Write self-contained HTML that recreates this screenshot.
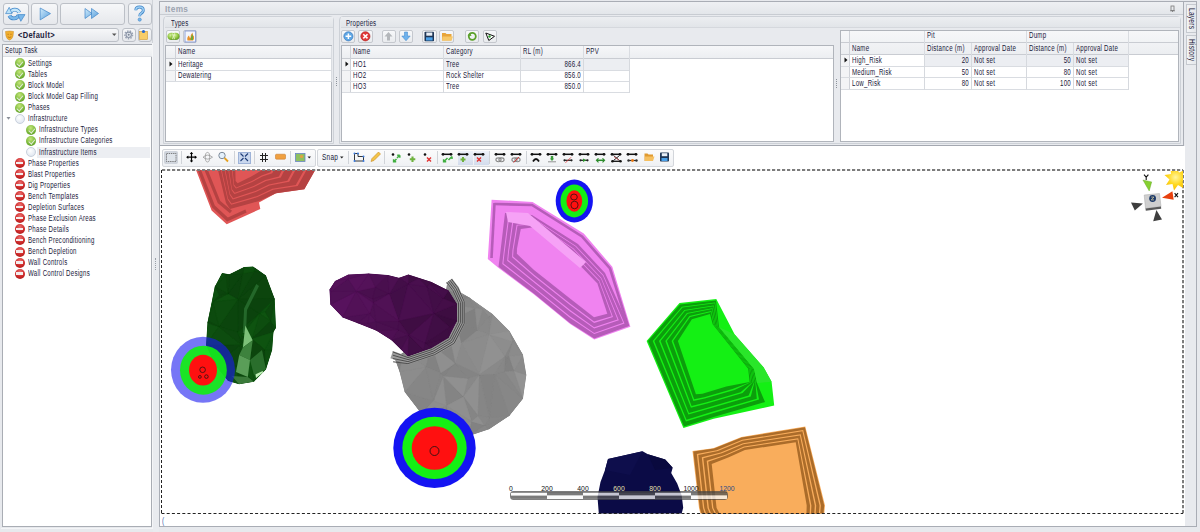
<!DOCTYPE html>
<html><head><meta charset="utf-8">
<style>
*{box-sizing:border-box;margin:0;padding:0}
html,body{width:1200px;height:532px;overflow:hidden;background:#e7e9ed;font-family:"Liberation Sans",sans-serif;position:relative}
.a{position:absolute}
.t{position:absolute;font-size:8.5px;line-height:10px;white-space:nowrap;color:#20203a;letter-spacing:.35px;transform:scaleX(.72);transform-origin:0 0}
.tr{transform-origin:100% 0}
.btn{position:absolute;border:1px solid #bcc0c7;border-radius:3px;background:linear-gradient(#f6f7f9,#e6e8ec)}
.sbtn{position:absolute;border:1px solid #c5c8ce;border-radius:2px;background:linear-gradient(#f7f8fa,#e9ebee)}
.ic{position:absolute;width:10px;height:10px;border-radius:50%}
.ic.g{background:radial-gradient(circle at 45% 30%,#c4e67a,#7ab83a 55%,#4f8a1e)}
.ic.g::after{content:"";position:absolute;left:3.8px;top:2px;width:2.6px;height:4.6px;border:solid #e4ecdc;border-width:0 1.3px 1.3px 0;transform:rotate(40deg)}
.ic.r{background:radial-gradient(circle at 50% 30%,#ee7070,#cc2828 55%,#a01818)}
.ic.r::after{content:"";position:absolute;left:1.4px;top:3.9px;width:7.2px;height:2.2px;background:#f4eeee}
.ic.o{background:radial-gradient(circle at 40% 35%,#ffffff,#e4eaf2 70%);border:1px solid #c8d0dc}
.grid{position:absolute;background:#fff;border:1px solid #a9adb4}
.hd{position:absolute;background:linear-gradient(#f5f6f8,#eceef1);border-right:1px solid #d0d3d8;border-bottom:1px solid #c9ccd2}
.ln{position:absolute;background:#d9dce1}
</style></head><body>
<!-- LEFT PANEL -->
<div class="a" style="left:0;top:0;width:155px;height:532px;background:#e7e9ed"></div>
<div class="btn" style="left:2.5px;top:2.5px;width:26px;height:22.5px"></div>
<div class="btn" style="left:31px;top:2.5px;width:26.5px;height:22.5px"></div>
<div class="btn" style="left:60px;top:2.5px;width:64.5px;height:22.5px"></div>
<div class="btn" style="left:127.5px;top:2.5px;width:24px;height:22.5px"></div>
<svg class="a" style="left:0;top:0" width="155" height="28" viewBox="0 0 155 28">
 <defs><linearGradient id="bl" x1="0" y1="0" x2="0" y2="1"><stop offset="0" stop-color="#d4eefc"/><stop offset="1" stop-color="#6fb0e6"/></linearGradient>
 <linearGradient id="bl2" x1="0" y1="0" x2="1" y2="1"><stop offset="0" stop-color="#cfeafb"/><stop offset="1" stop-color="#5aa0dc"/></linearGradient></defs>
 <!-- refresh -->
 <path d="M10.3 12.5 A5 5 0 0 1 19.3 12.5" fill="none" stroke="#3f85c8" stroke-width="3.8"/>
 <path d="M10.3 12.5 A5 5 0 0 1 19.3 12.5" fill="none" stroke="#c4e6fa" stroke-width="2.4"/>
 <path d="M18.6 15.2 A5 5 0 0 1 9.4 15.6" fill="none" stroke="#3f85c8" stroke-width="3.8"/>
 <path d="M18.6 15.2 A5 5 0 0 1 9.4 15.6" fill="none" stroke="#7ab8ea" stroke-width="2.4"/>
 <path d="M5.6 13.6 L9.2 7.3 L12 13.6 Z" fill="#b8e0f8" stroke="#3f85c8" stroke-width=".7"/>
 <path d="M17.8 14.6 L25 14.6 L20.8 21.3 Z" fill="#7ab8ea" stroke="#3f85c8" stroke-width=".7"/>
 <!-- play -->
 <path d="M40.2 8 L50.5 13.6 L40.2 19.9 Z" fill="url(#bl2)" stroke="#3f85c8" stroke-width=".7"/>
 <!-- fast fwd -->
 <path d="M85 8.5 L92 13.5 L85 18.5 Z M91.5 8.5 L98.5 13.5 L91.5 18.5 Z" fill="url(#bl2)" stroke="#3f85c8" stroke-width=".7"/>
 <!-- help -->
 <path d="M135.8 10.2 Q135.8 7 139.5 7 Q143.3 7 143.3 10.2 Q143.3 12.3 141 13.4 Q139.7 14.1 139.7 16.2" fill="none" stroke="#3f85c8" stroke-width="2.8"/>
 <path d="M135.8 10.2 Q135.8 7 139.5 7 Q143.3 7 143.3 10.2 Q143.3 12.3 141 13.4 Q139.7 14.1 139.7 16.2" fill="none" stroke="#9fd0f4" stroke-width="1.4"/>
 <circle cx="139.7" cy="19.6" r="1.6" fill="#7ab8ea" stroke="#3f85c8" stroke-width=".6"/>
</svg>
<!-- combo -->
<div class="btn" style="left:2px;top:28px;width:117px;height:13.5px;border-radius:3px"></div>
<svg class="a" style="left:4px;top:30px" width="12" height="11" viewBox="0 0 12 11"><path d="M1.5 1.5 Q5.5 0.5 9.5 1.5 L9 6 Q8 9.5 5.5 10 Q3 9.5 2 6 Z" fill="#f2b030" stroke="#c88418" stroke-width=".5"/><path d="M3.5 4.3h1.3M6.3 4.3h1.3M3.8 6.8 Q5.5 8.3 7.3 6.8" stroke="#a05a10" stroke-width=".6" fill="none"/></svg>
<div class="t" style="left:18px;top:30px;font-weight:bold;font-size:8.5px;transform:scaleX(.88)">&lt;Default&gt;</div>
<svg class="a" style="left:112px;top:33px" width="5" height="4"><path d="M0 0.5h4.5L2.25 3z" fill="#555"/></svg>
<div class="btn" style="left:122px;top:28px;width:13.5px;height:13.5px"></div>
<div class="btn" style="left:138px;top:28px;width:13.5px;height:13.5px"></div>
<svg class="a" style="left:122px;top:28px" width="30" height="14" viewBox="0 0 30 14">
 <circle cx="6.7" cy="6.8" r="3.9" fill="none" stroke="#9aa3b3" stroke-width="1.4" stroke-dasharray="1.5 1.2"/>
 <circle cx="6.7" cy="6.8" r="2.7" fill="#e4e8ee" stroke="#8c96a8" stroke-width="1.1"/>
 <circle cx="6.7" cy="6.8" r="1" fill="#7a8496"/>
 <rect x="17.5" y="3.5" width="8" height="8" fill="#f8cd6a" stroke="#d39b33" stroke-width=".6"/>
 <circle cx="21.5" cy="3.5" r="1.6" fill="#2a6ad0"/>
</svg>
<!-- tree panel -->
<div class="a" style="left:152px;top:0;width:1px;height:44px;background:#cfd3d9"></div>
<div class="a" style="left:1px;top:43px;width:152px;height:486px;border:1px solid #f4f5f7;border-top:none;border-left:none"></div><div class="a" style="left:2px;top:44px;width:150px;height:483px;border:1px solid #a9adb4;background:#fff"></div>
<div class="a" style="left:3px;top:45px;width:149px;height:12px;background:linear-gradient(#f7f8f9,#eceef1);border-bottom:1px solid #dadde2"></div>
<div class="t" style="left:5px;top:45px">Setup Task</div>
<div class="a" style="left:36.7px;top:146.5px;width:113.7px;height:11px;background:#eceef2"></div>
<svg class="a" style="left:6px;top:116px" width="5" height="5"><path d="M0.5 1h4L2.5 3.8z" fill="#8a8f98"/></svg>
<div class="ic g" style="left:14.6px;top:58.3px"></div>
<div class="t" style="left:27.6px;top:57.9px">Settings</div>
<div class="ic g" style="left:14.6px;top:69.4px"></div>
<div class="t" style="left:27.6px;top:69.0px">Tables</div>
<div class="ic g" style="left:14.6px;top:80.4px"></div>
<div class="t" style="left:27.6px;top:80.0px">Block Model</div>
<div class="ic g" style="left:14.6px;top:91.5px"></div>
<div class="t" style="left:27.6px;top:91.1px">Block Model Gap Filling</div>
<div class="ic g" style="left:14.6px;top:102.6px"></div>
<div class="t" style="left:27.6px;top:102.2px">Phases</div>
<div class="ic o" style="left:14.6px;top:113.7px"></div>
<div class="t" style="left:27.6px;top:113.3px">Infrastructure</div>
<div class="ic g" style="left:25.8px;top:124.7px"></div>
<div class="t" style="left:38.5px;top:124.3px">Infrastructure Types</div>
<div class="ic g" style="left:25.8px;top:135.8px"></div>
<div class="t" style="left:38.5px;top:135.4px">Infrastructure Categories</div>
<div class="ic o" style="left:25.8px;top:146.9px"></div>
<div class="t" style="left:38.5px;top:146.5px">Infrastructure Items</div>
<div class="ic r" style="left:14.6px;top:157.9px"></div>
<div class="t" style="left:27.6px;top:157.5px">Phase Properties</div>
<div class="ic r" style="left:14.6px;top:169.0px"></div>
<div class="t" style="left:27.6px;top:168.6px">Blast Properties</div>
<div class="ic r" style="left:14.6px;top:180.1px"></div>
<div class="t" style="left:27.6px;top:179.7px">Dig Properties</div>
<div class="ic r" style="left:14.6px;top:191.1px"></div>
<div class="t" style="left:27.6px;top:190.7px">Bench Templates</div>
<div class="ic r" style="left:14.6px;top:202.2px"></div>
<div class="t" style="left:27.6px;top:201.8px">Depletion Surfaces</div>
<div class="ic r" style="left:14.6px;top:213.3px"></div>
<div class="t" style="left:27.6px;top:212.9px">Phase Exclusion Areas</div>
<div class="ic r" style="left:14.6px;top:224.4px"></div>
<div class="t" style="left:27.6px;top:223.9px">Phase Details</div>
<div class="ic r" style="left:14.6px;top:235.4px"></div>
<div class="t" style="left:27.6px;top:235.0px">Bench Preconditioning</div>
<div class="ic r" style="left:14.6px;top:246.5px"></div>
<div class="t" style="left:27.6px;top:246.1px">Bench Depletion</div>
<div class="ic r" style="left:14.6px;top:257.6px"></div>
<div class="t" style="left:27.6px;top:257.2px">Wall Controls</div>
<div class="ic r" style="left:14.6px;top:268.6px"></div>
<div class="t" style="left:27.6px;top:268.2px">Wall Control Designs</div><!-- splitter -->
<div class="a" style="left:153px;top:0;width:6px;height:532px;background:#e9ebef"></div>
<div class="a" style="left:155px;top:258px;width:1px;height:12px;border-left:1px dotted #9aa0a8"></div>
<!-- ITEMS panel -->
<div class="a" style="left:159px;top:1px;width:1038px;height:526px;background:#e8eaee;border:1px solid #a9adb5"></div>
<div class="a" style="left:160px;top:2px;width:1024px;height:144px;background:#e8eaee;border-right:1px solid #a9adb5;border-bottom:1px solid #a4a8b0"></div>
<div class="a" style="left:160px;top:2px;width:1023px;height:13px;background:linear-gradient(#eef0f3,#e3e6ea);border-bottom:1px solid #c8ccd2"></div>
<div class="t" style="left:165px;top:4px;color:#9ba3b0;-webkit-text-stroke:0;font-weight:bold;font-size:9px;transform:scaleX(.92)">Items</div>
<svg class="a" style="left:1170px;top:5px" width="6" height="7"><rect x="1" y="1" width="3" height="4.5" fill="none" stroke="#777" stroke-width=".8"/><path d="M0 5.8h5M2.5 5.8v1.2" stroke="#777" stroke-width=".8"/></svg>
<!-- Types group -->
<div class="a" style="left:163px;top:16px;width:170.5px;height:128px;border:1px solid #cdd1d7;border-radius:4px 4px 0 0;background:#e8eaee"></div>
<div class="a" style="left:164.5px;top:17px;width:168px;height:11px;background:linear-gradient(#eceef1,#e2e5e9);border-bottom:1px solid #d5d8dd"></div>
<div class="t" style="left:171px;top:18px">Types</div>
<div class="sbtn" style="left:165.5px;top:29.5px;width:14.5px;height:13px"></div>
<div class="sbtn" style="left:183px;top:29.5px;width:14px;height:13px"></div>
<!-- Properties group -->
<div class="a" style="left:339px;top:16px;width:841.5px;height:128px;border:1px solid #cdd1d7;border-radius:4px 4px 0 0;background:#e8eaee"></div>
<div class="a" style="left:340.5px;top:17px;width:839px;height:11px;background:linear-gradient(#eceef1,#e2e5e9);border-bottom:1px solid #d5d8dd"></div>
<div class="t" style="left:345.5px;top:18px">Properties</div>
<div class="a" style="left:165.0px;top:45.0px;width:167.0px;height:97.0px;background:#fff;border:1px solid #b0b4bb"></div>
<div class="a" style="left:166.0px;top:46.0px;width:165.0px;height:12.0px;background:linear-gradient(#f6f7f9,#eceef1)"></div>
<div class="a" style="left:166.0px;top:58.0px;width:165.0px;height:1.0px;background:#c9ccd2"></div>
<div class="a" style="left:166.0px;top:59.0px;width:10.0px;height:22.0px;background:#f3f4f6"></div>
<div class="a" style="left:175.0px;top:46.0px;width:1.0px;height:36.0px;background:#cfd2d8"></div>
<div class="a" style="left:166.0px;top:70.0px;width:166.0px;height:1.0px;background:#d9dce1"></div>
<div class="a" style="left:166.0px;top:81.0px;width:166.0px;height:1.0px;background:#d9dce1"></div>
<div class="a" style="left:331.0px;top:46.0px;width:1.0px;height:36.0px;background:#d9dce1"></div>
<div class="t" style="left:177.8px;top:46px;">Name</div>
<div class="t" style="left:177.8px;top:59px;">Heritage</div>
<div class="t" style="left:177.8px;top:70px;">Dewatering</div>
<svg class="a" style="left:169px;top:61px" width="4" height="6"><path d="M0.5 0.5L3.5 3L0.5 5.5z" fill="#111"/></svg>
<div class="a" style="left:341.0px;top:45.0px;width:493.0px;height:97.0px;background:#fff;border:1px solid #b0b4bb"></div>
<div class="a" style="left:342.0px;top:46.0px;width:491.0px;height:12.0px;background:linear-gradient(#f6f7f9,#eceef1)"></div>
<div class="a" style="left:342.0px;top:58.0px;width:491.0px;height:1.0px;background:#c9ccd2"></div>
<div class="a" style="left:342.0px;top:59.0px;width:9.0px;height:33.0px;background:#f3f4f6"></div>
<div class="a" style="left:350.0px;top:46.0px;width:1.0px;height:47.0px;background:#cfd2d8"></div>
<div class="a" style="left:342.0px;top:70.0px;width:288.0px;height:1.0px;background:#d9dce1"></div>
<div class="a" style="left:342.0px;top:81.0px;width:288.0px;height:1.0px;background:#d9dce1"></div>
<div class="a" style="left:342.0px;top:92.0px;width:288.0px;height:1.0px;background:#d9dce1"></div>
<div class="a" style="left:443.0px;top:46.0px;width:1.0px;height:47.0px;background:#d9dce1"></div>
<div class="a" style="left:520.0px;top:46.0px;width:1.0px;height:47.0px;background:#d9dce1"></div>
<div class="a" style="left:583.0px;top:46.0px;width:1.0px;height:47.0px;background:#d9dce1"></div>
<div class="a" style="left:629.0px;top:46.0px;width:1.0px;height:47.0px;background:#d9dce1"></div>
<div class="a" style="left:444.0px;top:59.0px;width:185.0px;height:11.0px;background:#eceef2"></div>
<div class="a" style="left:443.0px;top:59.0px;width:1.0px;height:34.0px;background:#d6d9de"></div>
<div class="a" style="left:520.0px;top:59.0px;width:1.0px;height:34.0px;background:#d6d9de"></div>
<div class="a" style="left:583.0px;top:59.0px;width:1.0px;height:34.0px;background:#d6d9de"></div>
<div class="a" style="left:629.0px;top:59.0px;width:1.0px;height:34.0px;background:#d6d9de"></div>
<div class="t" style="left:353.3px;top:46px;">Name</div>
<div class="t" style="left:446.0px;top:46px;">Category</div>
<div class="t" style="left:523.0px;top:46px;">RL (m)</div>
<div class="t" style="left:586.0px;top:46px;">PPV</div>
<div class="t" style="left:353.3px;top:59px;">HO1</div>
<div class="t" style="left:446.0px;top:59px;">Tree</div>
<div class="t tr" style="left:520.8px;width:60px;text-align:right;top:59px">866.4</div>
<div class="t" style="left:353.3px;top:70px;">HO2</div>
<div class="t" style="left:446.0px;top:70px;">Rock Shelter</div>
<div class="t tr" style="left:520.8px;width:60px;text-align:right;top:70px">856.0</div>
<div class="t" style="left:353.3px;top:81px;">HO3</div>
<div class="t" style="left:446.0px;top:81px;">Tree</div>
<div class="t tr" style="left:520.8px;width:60px;text-align:right;top:81px">850.0</div>
<svg class="a" style="left:345px;top:61px" width="4" height="6"><path d="M0.5 0.5L3.5 3L0.5 5.5z" fill="#111"/></svg>
<div class="a" style="left:840.0px;top:30.0px;width:339.0px;height:112.0px;background:#fff;border:1px solid #b0b4bb"></div>
<div class="a" style="left:841.0px;top:31.0px;width:337.0px;height:23.0px;background:linear-gradient(#f6f7f9,#eceef1)"></div>
<div class="a" style="left:841.0px;top:42.0px;width:337.0px;height:1.0px;background:#c9ccd2"></div>
<div class="a" style="left:841.0px;top:54.0px;width:337.0px;height:1.0px;background:#c9ccd2"></div>
<div class="a" style="left:841.0px;top:55.0px;width:9.0px;height:34.0px;background:#f3f4f6"></div>
<div class="a" style="left:849.0px;top:31.0px;width:1.0px;height:59.0px;background:#cfd2d8"></div>
<div class="a" style="left:841.0px;top:66.0px;width:288.0px;height:1.0px;background:#d9dce1"></div>
<div class="a" style="left:841.0px;top:77.0px;width:288.0px;height:1.0px;background:#d9dce1"></div>
<div class="a" style="left:841.0px;top:89.0px;width:288.0px;height:1.0px;background:#d9dce1"></div>
<div class="a" style="left:924.0px;top:31.0px;width:1.0px;height:59.0px;background:#d9dce1"></div>
<div class="a" style="left:971.0px;top:43.0px;width:1.0px;height:47.0px;background:#d9dce1"></div>
<div class="a" style="left:1026.0px;top:31.0px;width:1.0px;height:59.0px;background:#d9dce1"></div>
<div class="a" style="left:1073.0px;top:43.0px;width:1.0px;height:47.0px;background:#d9dce1"></div>
<div class="a" style="left:1128.0px;top:31.0px;width:1.0px;height:59.0px;background:#d9dce1"></div>
<div class="a" style="left:925.0px;top:55.0px;width:203.0px;height:11.0px;background:#eceef2"></div>
<div class="a" style="left:924.0px;top:55.0px;width:1.0px;height:35.0px;background:#d6d9de"></div>
<div class="a" style="left:971.0px;top:55.0px;width:1.0px;height:35.0px;background:#d6d9de"></div>
<div class="a" style="left:1026.0px;top:55.0px;width:1.0px;height:35.0px;background:#d6d9de"></div>
<div class="a" style="left:1073.0px;top:55.0px;width:1.0px;height:35.0px;background:#d6d9de"></div>
<div class="a" style="left:1128.0px;top:55.0px;width:1.0px;height:35.0px;background:#d6d9de"></div>
<div class="t" style="left:927.3px;top:30px;">Pit</div>
<div class="t" style="left:1029.0px;top:30px;">Dump</div>
<div class="t" style="left:852.0px;top:43px;">Name</div>
<div class="t" style="left:927.3px;top:43px;">Distance (m)</div>
<div class="t" style="left:974.2px;top:43px;">Approval Date</div>
<div class="t" style="left:1029.0px;top:43px;">Distance (m)</div>
<div class="t" style="left:1076.0px;top:43px;">Approval Date</div>
<div class="t" style="left:852.0px;top:55px;">High_Risk</div>
<div class="t tr" style="left:908.7px;width:60px;text-align:right;top:55px">20</div>
<div class="t" style="left:974.0px;top:55px;">Not set</div>
<div class="t tr" style="left:1011.0px;width:60px;text-align:right;top:55px">50</div>
<div class="t" style="left:1076.0px;top:55px;">Not set</div>
<div class="t" style="left:852.0px;top:67px;">Medium_Risk</div>
<div class="t tr" style="left:908.7px;width:60px;text-align:right;top:67px">50</div>
<div class="t" style="left:974.0px;top:67px;">Not set</div>
<div class="t tr" style="left:1011.0px;width:60px;text-align:right;top:67px">80</div>
<div class="t" style="left:1076.0px;top:67px;">Not set</div>
<div class="t" style="left:852.0px;top:78px;">Low_Risk</div>
<div class="t tr" style="left:908.7px;width:60px;text-align:right;top:78px">80</div>
<div class="t" style="left:974.0px;top:78px;">Not set</div>
<div class="t tr" style="left:1011.0px;width:60px;text-align:right;top:78px">100</div>
<div class="t" style="left:1076.0px;top:78px;">Not set</div>
<svg class="a" style="left:844px;top:57px" width="4" height="6"><path d="M0.5 0.5L3.5 3L0.5 5.5z" fill="#111"/></svg><!-- group toolbars -->
<div class="sbtn" style="left:341.4px;top:29.7px;width:14.1px;height:13.2px"></div>
<div class="sbtn" style="left:358.2px;top:29.7px;width:14.4px;height:13.2px"></div>
<div class="sbtn" style="left:381.5px;top:29.7px;width:14px;height:13.2px"></div>
<div class="sbtn" style="left:398.8px;top:29.7px;width:14.6px;height:13.2px"></div>
<div class="sbtn" style="left:422px;top:29.7px;width:14.7px;height:13.2px"></div>
<div class="sbtn" style="left:439.4px;top:29.7px;width:14.8px;height:13.2px"></div>
<div class="sbtn" style="left:465.1px;top:29.7px;width:14.4px;height:13.2px"></div>
<div class="sbtn" style="left:482.6px;top:29.7px;width:14.6px;height:13.2px"></div>
<svg class="a" style="left:160px;top:28px" width="340" height="16" viewBox="160 28 340 16">
 <!-- types: green circles -->
 <defs><radialGradient id="gs" cx=".4" cy=".35" r=".7"><stop offset="0" stop-color="#d8f0a0"/><stop offset=".6" stop-color="#8cc43c"/><stop offset="1" stop-color="#5a8e22"/></radialGradient></defs>
 <ellipse cx="171.5" cy="36.3" rx="4" ry="3.6" fill="url(#gs)"/>
 <ellipse cx="175.5" cy="36.3" rx="4" ry="3.6" fill="url(#gs)"/>
 <path d="M172.5 33.5q1.5 2.8 0 5.6M174.5 33.5q-1.5 2.8 0 5.6" stroke="#eef8d8" stroke-width=".8" fill="none"/>
 <!-- types: second icon -->
 <rect x="185" y="31" width="10.5" height="11" fill="#f4f6fc" stroke="#7a90d0" stroke-width=".8"/>
 <path d="M187.5 40.5q-1-3 1.5-5 q.5 2.5 1.5 2.5 q-.5-3 2-5.5 q0 3 1.5 4 q.5 2.5-1 4z" fill="#e8902a"/>
 <path d="M190.5 40q0-3 2-6 q.8 3 .5 6z" fill="#6aaa3a"/>
 <!-- add -->
 <circle cx="348.4" cy="36.3" r="4.6" fill="#5ea6e4" stroke="#2f6eb6" stroke-width=".6"/>
 <path d="M345.6 36.3h5.6M348.4 33.5v5.6" stroke="#fff" stroke-width="1.5"/>
 <!-- delete -->
 <circle cx="365.4" cy="36.3" r="4.6" fill="#e23a3a" stroke="#a81818" stroke-width=".6"/>
 <path d="M363.3 34.2l4.2 4.2M367.5 34.2l-4.2 4.2" stroke="#fff" stroke-width="1.5"/>
 <!-- up (disabled) -->
 <path d="M388.5 32 L392.5 36.5 L390 36.5 L390 40.5 L387 40.5 L387 36.5 L384.5 36.5 Z" fill="#b4b7bb"/>
 <!-- down -->
 <path d="M406 40.8 L401.8 36 L404.5 36 L404.5 32 L407.5 32 L407.5 36 L410.2 36 Z" fill="#6fb2ec" stroke="#3a82c8" stroke-width=".5"/>
 <!-- save -->
 <rect x="424.5" y="31.8" width="9.5" height="9.5" rx=".8" fill="#1f3656"/>
 <rect x="426.3" y="32.5" width="6" height="3.2" fill="#e8eef6"/>
 <rect x="426" y="37.3" width="6.6" height="3.2" fill="#4aa0e8"/>
 <!-- open folder -->
 <path d="M442 33 h3.5 l1 1 h5 v6.5 h-9.5z" fill="#e8a53a"/>
 <path d="M442.5 36.5 h10.5 l-1.5 4 h-9.5z" fill="#f7c868"/>
 <!-- refresh green -->
 <circle cx="472.3" cy="36.3" r="3.5" fill="none" stroke="#5aa02a" stroke-width="1.8"/>
 <path d="M467.5 35.5 l2.5 -3 l1.5 3.5z" fill="#5aa02a"/>
 <!-- filter -->
 <path d="M485.8 33 L494.5 36.3 L488.8 40.5 Z" fill="#fff" stroke="#111" stroke-width="1"/>
 <circle cx="489.5" cy="36.5" r="1.2" fill="#2aa02a"/>
</svg>
<!-- splitter grips -->
<div class="a" style="left:335.5px;top:77px;width:1px;height:9px;border-left:1px dotted #8d939b"></div>
<div class="a" style="left:835.8px;top:79px;width:1px;height:9px;border-left:1px dotted #8d939b"></div>

<!-- VIEWPORT -->
<div class="a" style="left:160px;top:146px;width:1025px;height:380px;background:#fff"></div>

<svg class="a" style="left:0;top:0" width="1200" height="532" viewBox="0 0 1200 532">
<defs><clipPath id="vpc"><rect x="162" y="170" width="1021" height="343.5"/></clipPath></defs>
<g clip-path="url(#vpc)">
<polygon points="194.5,166.0 317.5,166.0 304.3,189.3 276.0,193.3 259.0,202.5 260.3,209.0 226.7,224.2 211.6,210.4" fill="#e05656" />
<polygon points="217.0,166.0 317.5,166.0 304.3,189.3 276.0,193.3 259.0,201.0 252.0,203.0 230.0,209.0 226.0,203.0" fill="#b54242" />
<polygon points="220.0,166.0 308.8,166.0 297.7,186.0 273.2,189.8 257.6,197.1 251.4,198.9 231.2,204.8 227.6,199.4" fill="#e05656" />
<polygon points="220.8,166.0 306.4,166.0 295.8,185.0 272.4,188.8 257.2,196.0 251.2,197.8 231.6,203.6 228.0,198.4" fill="#b54242" />
<polygon points="223.8,166.0 297.7,166.0 289.2,181.7 269.6,185.4 255.8,192.1 250.6,193.7 232.8,199.4 229.6,194.8" fill="#e05656" />
<polygon points="224.6,166.0 295.3,166.0 287.4,180.8 268.8,184.4 255.4,191.0 250.4,192.6 233.2,198.2 230.0,193.8" fill="#b54242" />
<polygon points="227.6,166.0 286.6,166.0 280.8,177.5 266.0,180.9 254.0,187.1 249.8,188.5 234.4,194.0 231.6,190.2" fill="#e05656" />
<polygon points="228.4,166.0 284.2,166.0 278.9,176.5 265.2,179.9 253.6,186.0 249.6,187.4 234.8,192.8 232.0,189.2" fill="#b54242" />
<polygon points="231.4,166.0 275.5,166.0 272.3,173.2 262.4,176.4 252.2,182.1 249.0,183.3 236.0,188.6 233.6,185.6" fill="#e05656" />
<polygon points="232.2,166.0 273.1,166.0 270.5,172.3 261.6,175.5 251.8,181.0 248.8,182.2 236.4,187.4 234.0,184.6" fill="#b54242" />
<polygon points="235.2,166.0 264.4,166.0 263.9,168.9 258.8,172.0 250.4,177.1 248.2,178.1 237.6,183.2 235.6,181.0" fill="#e05656" />
<polyline points="197.8,166.0 213.5,206.5 227.5,219.5 246.0,211.0" fill="none" stroke="#b54242" stroke-width="3.2" stroke-linejoin="miter" />
<polyline points="204.5,166.0 219.0,202.0 231.0,212.0" fill="none" stroke="#b54242" stroke-width="3.2" stroke-linejoin="miter" />
<clipPath id="cdg"><polygon points="222.0,273.0 229.4,274.2 244.0,267.0 253.0,266.4 266.0,275.4 274.7,298.7 276.0,328.0 273.5,332.0 272.2,350.0 266.0,369.6 254.0,381.8 239.0,384.2 228.0,381.0 215.0,365.0 206.0,345.0 207.4,323.0 214.8,286.4"/></clipPath>
<g clip-path="url(#cdg)">
<polygon points="222.0,273.0 229.4,274.2 244.0,267.0 253.0,266.4 266.0,275.4 274.7,298.7 276.0,328.0 273.5,332.0 272.2,350.0 266.0,369.6 254.0,381.8 239.0,384.2 228.0,381.0 215.0,365.0 206.0,345.0 207.4,323.0 214.8,286.4" fill="#0d4b0f" />
<polygon points="250.1,359.8 266.0,369.6 254.0,381.8" fill="#0e5310" stroke="#0e5310" stroke-width=".3"/>
<polygon points="212.6,302.1 228.1,293.5 238.0,299.2" fill="#0e5110" stroke="#0e5110" stroke-width=".3"/>
<polygon points="228.1,293.5 243.0,273.4 238.0,299.2" fill="#0b420d" stroke="#0b420d" stroke-width=".3"/>
<polygon points="266.0,275.4 274.7,298.7 238.0,299.2" fill="#0c450d" stroke="#0c450d" stroke-width=".3"/>
<polygon points="236.8,365.6 239.0,384.2 228.0,381.0" fill="#0e5210" stroke="#0e5210" stroke-width=".3"/>
<polygon points="215.0,365.0 236.8,365.6 228.0,381.0" fill="#0c4a0e" stroke="#0c4a0e" stroke-width=".3"/>
<polygon points="236.8,365.6 250.1,359.8 254.0,381.8" fill="#0e5310" stroke="#0e5310" stroke-width=".3"/>
<polygon points="239.0,384.2 236.8,365.6 254.0,381.8" fill="#0c490e" stroke="#0c490e" stroke-width=".3"/>
<polygon points="264.8,349.8 266.0,369.6 250.1,359.8" fill="#0b430d" stroke="#0b430d" stroke-width=".3"/>
<polygon points="264.8,349.8 272.2,350.0 266.0,369.6" fill="#0d4d0f" stroke="#0d4d0f" stroke-width=".3"/>
<polygon points="264.8,349.8 273.5,332.0 272.2,350.0" fill="#0d5010" stroke="#0d5010" stroke-width=".3"/>
<polygon points="254.5,271.3 253.0,266.4 266.0,275.4" fill="#0c460e" stroke="#0c460e" stroke-width=".3"/>
<polygon points="254.5,271.3 266.0,275.4 238.0,299.2" fill="#0b430d" stroke="#0b430d" stroke-width=".3"/>
<polygon points="243.0,273.4 254.5,271.3 238.0,299.2" fill="#0c470e" stroke="#0c470e" stroke-width=".3"/>
<polygon points="254.5,271.3 244.0,267.0 253.0,266.4" fill="#0e5310" stroke="#0e5310" stroke-width=".3"/>
<polygon points="254.5,271.3 243.0,273.4 244.0,267.0" fill="#0d4f0f" stroke="#0d4f0f" stroke-width=".3"/>
<polygon points="229.4,274.2 243.0,273.4 228.1,293.5" fill="#0b440d" stroke="#0b440d" stroke-width=".3"/>
<polygon points="243.0,273.4 229.4,274.2 244.0,267.0" fill="#0c460e" stroke="#0c460e" stroke-width=".3"/>
<polygon points="259.6,313.6 237.7,332.3 238.0,299.2" fill="#0b430d" stroke="#0b430d" stroke-width=".3"/>
<polygon points="274.7,298.7 259.6,313.6 238.0,299.2" fill="#0b430d" stroke="#0b430d" stroke-width=".3"/>
<polygon points="259.6,313.6 274.7,298.7 265.3,311.9" fill="#0d5010" stroke="#0d5010" stroke-width=".3"/>
<polygon points="237.7,332.3 218.9,326.7 238.0,299.2" fill="#0b450d" stroke="#0b450d" stroke-width=".3"/>
<polygon points="218.9,326.7 212.6,302.1 238.0,299.2" fill="#0d4c0f" stroke="#0d4c0f" stroke-width=".3"/>
<polygon points="218.9,326.7 208.1,321.1 212.6,302.1" fill="#0c4a0e" stroke="#0c4a0e" stroke-width=".3"/>
<polygon points="219.3,294.9 228.1,293.5 212.6,302.1" fill="#0c450d" stroke="#0c450d" stroke-width=".3"/>
<polygon points="214.8,286.4 219.3,294.9 212.6,302.1" fill="#0d4f0f" stroke="#0d4f0f" stroke-width=".3"/>
<polygon points="219.3,294.9 214.8,286.4 228.1,293.5" fill="#0b440d" stroke="#0b440d" stroke-width=".3"/>
<polygon points="226.2,274.7 214.8,286.4 222.0,273.0" fill="#0d4d0f" stroke="#0d4d0f" stroke-width=".3"/>
<polygon points="229.4,274.2 226.2,274.7 222.0,273.0" fill="#0b440d" stroke="#0b440d" stroke-width=".3"/>
<polygon points="214.8,286.4 226.2,274.7 228.1,293.5" fill="#0c490e" stroke="#0c490e" stroke-width=".3"/>
<polygon points="226.2,274.7 229.4,274.2 228.1,293.5" fill="#0c450d" stroke="#0c450d" stroke-width=".3"/>
<polygon points="273.5,332.0 270.7,321.3 276.0,328.0" fill="#0c460e" stroke="#0c460e" stroke-width=".3"/>
<polygon points="270.7,321.3 259.6,313.6 265.3,311.9" fill="#0e5310" stroke="#0e5310" stroke-width=".3"/>
<polygon points="270.7,321.3 274.7,298.7 276.0,328.0" fill="#0d5010" stroke="#0d5010" stroke-width=".3"/>
<polygon points="274.7,298.7 270.7,321.3 265.3,311.9" fill="#0c470e" stroke="#0c470e" stroke-width=".3"/>
<polygon points="207.4,323.0 218.9,326.7 206.0,345.0" fill="#0e5110" stroke="#0e5110" stroke-width=".3"/>
<polygon points="218.9,326.7 207.4,323.0 208.1,321.1" fill="#0c450d" stroke="#0c450d" stroke-width=".3"/>
<polygon points="208.1,321.1 207.4,323.0 212.6,302.1" fill="#0c490e" stroke="#0c490e" stroke-width=".3"/>
<polygon points="207.4,323.0 214.8,286.4 212.6,302.1" fill="#0e5110" stroke="#0e5110" stroke-width=".3"/>
<polygon points="270.7,321.3 251.8,338.9 259.6,313.6" fill="#0d4d0f" stroke="#0d4d0f" stroke-width=".3"/>
<polygon points="251.8,338.9 270.7,321.3 273.5,332.0" fill="#0b430d" stroke="#0b430d" stroke-width=".3"/>
<polygon points="264.8,349.8 251.8,338.9 273.5,332.0" fill="#0e5310" stroke="#0e5310" stroke-width=".3"/>
<polygon points="251.8,338.9 264.8,349.8 250.1,359.8" fill="#0c450d" stroke="#0c450d" stroke-width=".3"/>
<polygon points="236.8,365.6 241.0,344.4 250.1,359.8" fill="#0c460e" stroke="#0c460e" stroke-width=".3"/>
<polygon points="241.0,344.4 251.8,338.9 250.1,359.8" fill="#0d4f0f" stroke="#0d4f0f" stroke-width=".3"/>
<polygon points="251.8,338.9 241.0,344.4 242.3,341.8" fill="#0c470e" stroke="#0c470e" stroke-width=".3"/>
<polygon points="241.0,344.4 236.8,365.6 215.0,365.0" fill="#0c470e" stroke="#0c470e" stroke-width=".3"/>
<polygon points="241.0,344.4 215.0,365.0 206.0,345.0" fill="#0b430d" stroke="#0b430d" stroke-width=".3"/>
<polygon points="242.3,341.8 241.0,344.4 237.7,332.3" fill="#0b430d" stroke="#0b430d" stroke-width=".3"/>
<polygon points="218.9,326.7 241.0,344.4 206.0,345.0" fill="#0d4c0f" stroke="#0d4c0f" stroke-width=".3"/>
<polygon points="241.0,344.4 218.9,326.7 237.7,332.3" fill="#0c460e" stroke="#0c460e" stroke-width=".3"/>
<polygon points="241.5,335.6 242.3,341.8 237.7,332.3" fill="#0d4c0f" stroke="#0d4c0f" stroke-width=".3"/>
<polygon points="241.5,335.6 251.8,338.9 242.3,341.8" fill="#0c480e" stroke="#0c480e" stroke-width=".3"/>
<polygon points="259.6,313.6 241.5,335.6 237.7,332.3" fill="#0c4a0e" stroke="#0c4a0e" stroke-width=".3"/>
<polygon points="251.8,338.9 241.5,335.6 259.6,313.6" fill="#0e5310" stroke="#0e5310" stroke-width=".3"/>
</g>
<g clip-path="url(#cdg)">
<polygon points="256.3,284.0 259.0,286.0 247.0,310.0 246.0,333.0 242.9,333.0 244.1,308.5" fill="#24682a" />
<polygon points="245.3,325.6 252.7,340.2 242.9,347.6" fill="#7cc078" />
<polygon points="242.9,347.6 252.7,340.2 250.0,360.0 239.2,354.9" fill="#3d823d" />
<polygon points="239.2,354.9 250.0,360.0 247.8,376.9 236.0,372.0" fill="#5a9e58" />
<polygon points="253.9,364.7 263.7,372.0 256.0,378.0" fill="#c0f0b8" />
<polygon points="250.0,360.0 262.0,350.0 266.0,369.6 254.0,375.0" fill="#2a6e2c" />
<polygon points="232.0,376.0 247.8,376.9 254.0,381.8 239.0,384.2" fill="#3a7a3a" />
</g>
<clipPath id="cg"><polygon points="446.9,284.5 469.0,297.2 492.6,314.0 509.5,331.0 523.0,354.8 526.4,375.0 523.0,398.7 509.5,415.7 489.2,429.2 469.0,436.0 440.0,430.0 421.5,414.0 404.6,392.0 399.5,371.7 394.5,358.0 404.0,352.0 431.7,344.0 448.6,334.0 455.0,318.0 455.0,304.0 446.0,290.0"/></clipPath>
<g clip-path="url(#cg)">
<polygon points="446.9,284.5 469.0,297.2 492.6,314.0 509.5,331.0 523.0,354.8 526.4,375.0 523.0,398.7 509.5,415.7 489.2,429.2 469.0,436.0 440.0,430.0 421.5,414.0 404.6,392.0 399.5,371.7 394.5,358.0 404.0,352.0 431.7,344.0 448.6,334.0 455.0,318.0 455.0,304.0 446.0,290.0" fill="#8a8a8a" />
<polygon points="448.6,334.0 455.0,318.0 461.4,343.0" fill="#929292" stroke="#929292" stroke-width=".3"/>
<polygon points="425.9,367.0 404.0,352.0 431.7,344.0" fill="#8a8a8a" stroke="#8a8a8a" stroke-width=".3"/>
<polygon points="489.3,334.6 488.7,316.5 492.6,314.0" fill="#888888" stroke="#888888" stroke-width=".3"/>
<polygon points="509.5,331.0 489.3,334.6 492.6,314.0" fill="#8e8e8e" stroke="#8e8e8e" stroke-width=".3"/>
<polygon points="404.6,392.0 433.3,401.0 421.5,414.0" fill="#848484" stroke="#848484" stroke-width=".3"/>
<polygon points="433.3,401.0 404.6,392.0 425.9,367.0" fill="#868686" stroke="#868686" stroke-width=".3"/>
<polygon points="523.0,398.7 513.8,370.7 526.4,375.0" fill="#939393" stroke="#939393" stroke-width=".3"/>
<polygon points="504.2,371.4 513.8,370.7 523.0,398.7" fill="#8a8a8a" stroke="#8a8a8a" stroke-width=".3"/>
<polygon points="513.8,370.7 523.0,354.8 526.4,375.0" fill="#8a8a8a" stroke="#8a8a8a" stroke-width=".3"/>
<polygon points="477.2,330.1 455.0,318.0 475.0,308.2" fill="#808080" stroke="#808080" stroke-width=".3"/>
<polygon points="477.2,330.1 488.7,316.5 489.3,334.6" fill="#888888" stroke="#888888" stroke-width=".3"/>
<polygon points="477.2,330.1 489.3,334.6 461.4,343.0" fill="#8b8b8b" stroke="#8b8b8b" stroke-width=".3"/>
<polygon points="455.0,318.0 477.2,330.1 461.4,343.0" fill="#808080" stroke="#808080" stroke-width=".3"/>
<polygon points="455.0,318.0 455.0,304.0 475.0,308.2" fill="#8c8c8c" stroke="#8c8c8c" stroke-width=".3"/>
<polygon points="404.6,392.0 399.5,371.7 425.9,367.0" fill="#8c8c8c" stroke="#8c8c8c" stroke-width=".3"/>
<polygon points="404.0,352.0 399.5,371.7 394.5,358.0" fill="#818181" stroke="#818181" stroke-width=".3"/>
<polygon points="399.5,371.7 404.0,352.0 425.9,367.0" fill="#8c8c8c" stroke="#8c8c8c" stroke-width=".3"/>
<polygon points="478.8,307.3 483.0,309.2 475.0,308.2" fill="#898989" stroke="#898989" stroke-width=".3"/>
<polygon points="483.0,309.2 477.2,330.1 475.0,308.2" fill="#8d8d8d" stroke="#8d8d8d" stroke-width=".3"/>
<polygon points="477.2,330.1 483.0,309.2 488.7,316.5" fill="#878787" stroke="#878787" stroke-width=".3"/>
<polygon points="488.7,316.5 483.0,309.2 492.6,314.0" fill="#8d8d8d" stroke="#8d8d8d" stroke-width=".3"/>
<polygon points="513.8,370.7 508.7,356.1 523.0,354.8" fill="#8e8e8e" stroke="#8e8e8e" stroke-width=".3"/>
<polygon points="508.7,356.1 504.2,371.4 504.8,356.7" fill="#808080" stroke="#808080" stroke-width=".3"/>
<polygon points="508.7,356.1 513.8,370.7 504.2,371.4" fill="#818181" stroke="#818181" stroke-width=".3"/>
<polygon points="489.3,334.6 512.8,341.7 504.8,356.7" fill="#8d8d8d" stroke="#8d8d8d" stroke-width=".3"/>
<polygon points="509.5,331.0 512.8,341.7 489.3,334.6" fill="#929292" stroke="#929292" stroke-width=".3"/>
<polygon points="512.8,341.7 508.7,356.1 504.8,356.7" fill="#858585" stroke="#858585" stroke-width=".3"/>
<polygon points="512.8,341.7 509.5,331.0 523.0,354.8" fill="#898989" stroke="#898989" stroke-width=".3"/>
<polygon points="508.7,356.1 512.8,341.7 523.0,354.8" fill="#8b8b8b" stroke="#8b8b8b" stroke-width=".3"/>
<polygon points="489.2,429.2 488.7,424.0 509.5,415.7" fill="#868686" stroke="#868686" stroke-width=".3"/>
<polygon points="494.5,374.1 523.0,398.7 509.5,415.7" fill="#878787" stroke="#878787" stroke-width=".3"/>
<polygon points="494.5,374.1 504.2,371.4 523.0,398.7" fill="#868686" stroke="#868686" stroke-width=".3"/>
<polygon points="504.2,371.4 494.5,374.1 504.8,356.7" fill="#878787" stroke="#878787" stroke-width=".3"/>
<polygon points="440.0,430.0 453.1,426.2 469.0,436.0" fill="#8b8b8b" stroke="#8b8b8b" stroke-width=".3"/>
<polygon points="455.0,304.0 469.0,297.2 475.0,308.2" fill="#868686" stroke="#868686" stroke-width=".3"/>
<polygon points="469.0,297.2 478.8,307.3 475.0,308.2" fill="#878787" stroke="#878787" stroke-width=".3"/>
<polygon points="469.0,297.2 446.0,290.0 446.9,284.5" fill="#8f8f8f" stroke="#8f8f8f" stroke-width=".3"/>
<polygon points="469.0,297.2 455.0,304.0 446.0,290.0" fill="#808080" stroke="#808080" stroke-width=".3"/>
<polygon points="469.0,297.2 483.0,309.2 478.8,307.3" fill="#8b8b8b" stroke="#8b8b8b" stroke-width=".3"/>
<polygon points="483.0,309.2 469.0,297.2 492.6,314.0" fill="#8e8e8e" stroke="#8e8e8e" stroke-width=".3"/>
<polygon points="488.7,424.0 489.3,417.6 509.5,415.7" fill="#868686" stroke="#868686" stroke-width=".3"/>
<polygon points="489.3,417.6 494.5,374.1 509.5,415.7" fill="#848484" stroke="#848484" stroke-width=".3"/>
<polygon points="443.3,376.0 446.6,405.8 433.3,401.0" fill="#8f8f8f" stroke="#8f8f8f" stroke-width=".3"/>
<polygon points="446.6,405.8 443.3,376.0 463.5,396.8" fill="#848484" stroke="#848484" stroke-width=".3"/>
<polygon points="446.6,405.8 453.1,426.2 440.0,430.0" fill="#838383" stroke="#838383" stroke-width=".3"/>
<polygon points="446.6,405.8 440.0,430.0 421.5,414.0" fill="#888888" stroke="#888888" stroke-width=".3"/>
<polygon points="433.3,401.0 446.6,405.8 421.5,414.0" fill="#8d8d8d" stroke="#8d8d8d" stroke-width=".3"/>
<polygon points="440.8,373.1 425.9,367.0 431.7,344.0" fill="#828282" stroke="#828282" stroke-width=".3"/>
<polygon points="440.8,373.1 433.3,401.0 425.9,367.0" fill="#868686" stroke="#868686" stroke-width=".3"/>
<polygon points="440.8,373.1 443.3,376.0 433.3,401.0" fill="#868686" stroke="#868686" stroke-width=".3"/>
<polygon points="443.3,376.0 468.3,378.4 463.5,396.8" fill="#909090" stroke="#909090" stroke-width=".3"/>
<polygon points="468.3,378.4 479.4,374.7 463.5,396.8" fill="#888888" stroke="#888888" stroke-width=".3"/>
<polygon points="479.4,374.7 478.2,416.0 463.5,396.8" fill="#909090" stroke="#909090" stroke-width=".3"/>
<polygon points="489.3,417.6 479.4,374.7 494.5,374.1" fill="#838383" stroke="#838383" stroke-width=".3"/>
<polygon points="478.2,416.0 479.4,374.7 489.3,417.6" fill="#868686" stroke="#868686" stroke-width=".3"/>
<polygon points="489.3,334.6 479.4,374.7 461.4,343.0" fill="#8c8c8c" stroke="#8c8c8c" stroke-width=".3"/>
<polygon points="479.4,374.7 489.3,334.6 504.8,356.7" fill="#919191" stroke="#919191" stroke-width=".3"/>
<polygon points="494.5,374.1 479.4,374.7 504.8,356.7" fill="#898989" stroke="#898989" stroke-width=".3"/>
<polygon points="455.2,363.3 468.3,378.4 443.3,376.0" fill="#848484" stroke="#848484" stroke-width=".3"/>
<polygon points="440.8,373.1 455.2,363.3 443.3,376.0" fill="#828282" stroke="#828282" stroke-width=".3"/>
<polygon points="479.4,374.7 455.2,363.3 461.4,343.0" fill="#8a8a8a" stroke="#8a8a8a" stroke-width=".3"/>
<polygon points="455.2,363.3 479.4,374.7 468.3,378.4" fill="#848484" stroke="#848484" stroke-width=".3"/>
<polygon points="455.2,363.3 440.8,373.1 431.7,344.0" fill="#8f8f8f" stroke="#8f8f8f" stroke-width=".3"/>
<polygon points="455.2,363.3 448.6,334.0 461.4,343.0" fill="#909090" stroke="#909090" stroke-width=".3"/>
<polygon points="455.2,363.3 431.7,344.0 448.6,334.0" fill="#838383" stroke="#838383" stroke-width=".3"/>
<polygon points="478.2,416.0 471.6,421.5 463.5,396.8" fill="#858585" stroke="#858585" stroke-width=".3"/>
<polygon points="471.6,421.5 446.6,405.8 463.5,396.8" fill="#8f8f8f" stroke="#8f8f8f" stroke-width=".3"/>
<polygon points="446.6,405.8 471.6,421.5 453.1,426.2" fill="#8c8c8c" stroke="#8c8c8c" stroke-width=".3"/>
<polygon points="453.1,426.2 471.6,421.5 469.0,436.0" fill="#8f8f8f" stroke="#8f8f8f" stroke-width=".3"/>
<polygon points="484.5,425.2 489.2,429.2 469.0,436.0" fill="#878787" stroke="#878787" stroke-width=".3"/>
<polygon points="471.6,421.5 484.5,425.2 469.0,436.0" fill="#828282" stroke="#828282" stroke-width=".3"/>
<polygon points="484.5,425.2 488.7,424.0 489.2,429.2" fill="#858585" stroke="#858585" stroke-width=".3"/>
<polygon points="484.5,425.2 471.6,421.5 478.2,416.0" fill="#8f8f8f" stroke="#8f8f8f" stroke-width=".3"/>
<polygon points="484.5,425.2 489.3,417.6 488.7,424.0" fill="#858585" stroke="#858585" stroke-width=".3"/>
<polygon points="484.5,425.2 478.2,416.0 489.3,417.6" fill="#878787" stroke="#878787" stroke-width=".3"/>
</g>
<clipPath id="cp"><polygon points="329.4,289.4 335.0,281.0 348.2,274.4 368.9,273.5 388.0,275.0 399.0,277.8 408.3,274.4 431.7,282.0 448.6,290.5 457.0,304.0 457.0,321.0 448.6,337.8 431.7,348.0 408.0,356.4 400.8,349.6 391.4,340.2 376.4,330.8 357.6,323.3 342.6,317.6 330.3,304.5"/></clipPath>
<g clip-path="url(#cp)">
<polygon points="329.4,289.4 335.0,281.0 348.2,274.4 368.9,273.5 388.0,275.0 399.0,277.8 408.3,274.4 431.7,282.0 448.6,290.5 457.0,304.0 457.0,321.0 448.6,337.8 431.7,348.0 408.0,356.4 400.8,349.6 391.4,340.2 376.4,330.8 357.6,323.3 342.6,317.6 330.3,304.5" fill="#4a104f" />
<polygon points="457.0,321.0 433.8,313.4 457.0,304.0" fill="#3d0d41" stroke="#3d0d41" stroke-width=".3"/>
<polygon points="449.8,327.3 457.0,321.0 448.6,337.8" fill="#400d44" stroke="#400d44" stroke-width=".3"/>
<polygon points="449.8,327.3 433.8,313.4 457.0,321.0" fill="#390c3d" stroke="#390c3d" stroke-width=".3"/>
<polygon points="408.9,335.0 391.4,340.2 398.2,329.7" fill="#4a104f" stroke="#4a104f" stroke-width=".3"/>
<polygon points="342.6,317.6 330.3,304.5 356.1,291.4" fill="#57125d" stroke="#57125d" stroke-width=".3"/>
<polygon points="408.2,284.0 427.1,286.7 433.8,313.4" fill="#470f4c" stroke="#470f4c" stroke-width=".3"/>
<polygon points="375.5,287.3 372.5,299.2 356.1,291.4" fill="#490f4e" stroke="#490f4e" stroke-width=".3"/>
<polygon points="368.9,273.5 375.5,287.3 356.1,291.4" fill="#541259" stroke="#541259" stroke-width=".3"/>
<polygon points="372.5,299.2 375.5,287.3 389.3,293.9" fill="#470f4c" stroke="#470f4c" stroke-width=".3"/>
<polygon points="375.5,287.3 388.0,275.0 389.3,293.9" fill="#490f4e" stroke="#490f4e" stroke-width=".3"/>
<polygon points="388.0,275.0 375.5,287.3 368.9,273.5" fill="#4d1053" stroke="#4d1053" stroke-width=".3"/>
<polygon points="400.8,349.6 408.9,335.0 408.0,356.4" fill="#4b1050" stroke="#4b1050" stroke-width=".3"/>
<polygon points="408.9,335.0 400.8,349.6 391.4,340.2" fill="#450f4a" stroke="#450f4a" stroke-width=".3"/>
<polygon points="425.1,343.5 408.9,335.0 433.8,313.4" fill="#480f4d" stroke="#480f4d" stroke-width=".3"/>
<polygon points="449.8,327.3 425.1,343.5 433.8,313.4" fill="#400e45" stroke="#400e45" stroke-width=".3"/>
<polygon points="431.7,348.0 425.1,343.5 448.6,337.8" fill="#3e0d42" stroke="#3e0d42" stroke-width=".3"/>
<polygon points="425.1,343.5 449.8,327.3 448.6,337.8" fill="#3d0d41" stroke="#3d0d41" stroke-width=".3"/>
<polygon points="331.1,291.5 330.3,304.5 329.4,289.4" fill="#521158" stroke="#521158" stroke-width=".3"/>
<polygon points="330.3,304.5 331.1,291.5 356.1,291.4" fill="#4f1155" stroke="#4f1155" stroke-width=".3"/>
<polygon points="335.0,281.0 331.1,291.5 329.4,289.4" fill="#521157" stroke="#521157" stroke-width=".3"/>
<polygon points="427.1,286.7 443.4,298.3 433.8,313.4" fill="#420e47" stroke="#420e47" stroke-width=".3"/>
<polygon points="433.8,313.4 443.4,298.3 457.0,304.0" fill="#440e48" stroke="#440e48" stroke-width=".3"/>
<polygon points="443.4,298.3 448.6,290.5 457.0,304.0" fill="#390c3d" stroke="#390c3d" stroke-width=".3"/>
<polygon points="419.3,278.2 408.2,284.0 408.3,274.4" fill="#400d44" stroke="#400d44" stroke-width=".3"/>
<polygon points="419.3,278.2 427.1,286.7 408.2,284.0" fill="#490f4e" stroke="#490f4e" stroke-width=".3"/>
<polygon points="431.7,282.0 419.3,278.2 408.3,274.4" fill="#440e48" stroke="#440e48" stroke-width=".3"/>
<polygon points="419.3,278.2 431.7,282.0 427.1,286.7" fill="#410e45" stroke="#410e45" stroke-width=".3"/>
<polygon points="342.6,317.6 369.7,313.4 357.6,323.3" fill="#4d1053" stroke="#4d1053" stroke-width=".3"/>
<polygon points="369.7,313.4 342.6,317.6 356.1,291.4" fill="#521157" stroke="#521157" stroke-width=".3"/>
<polygon points="391.4,340.2 376.4,330.8 398.2,329.7" fill="#4e1053" stroke="#4e1053" stroke-width=".3"/>
<polygon points="376.4,330.8 376.1,321.5 398.2,329.7" fill="#4a104f" stroke="#4a104f" stroke-width=".3"/>
<polygon points="376.1,321.5 398.8,321.1 398.2,329.7" fill="#480f4d" stroke="#480f4d" stroke-width=".3"/>
<polygon points="408.2,284.0 398.8,321.1 389.3,293.9" fill="#420e47" stroke="#420e47" stroke-width=".3"/>
<polygon points="398.8,321.1 408.2,284.0 433.8,313.4" fill="#490f4e" stroke="#490f4e" stroke-width=".3"/>
<polygon points="408.9,335.0 398.8,321.1 433.8,313.4" fill="#3f0d43" stroke="#3f0d43" stroke-width=".3"/>
<polygon points="398.8,321.1 408.9,335.0 398.2,329.7" fill="#470f4c" stroke="#470f4c" stroke-width=".3"/>
<polygon points="408.2,284.0 399.0,277.8 408.3,274.4" fill="#4a104f" stroke="#4a104f" stroke-width=".3"/>
<polygon points="399.0,277.8 408.2,284.0 389.3,293.9" fill="#430e48" stroke="#430e48" stroke-width=".3"/>
<polygon points="388.0,275.0 399.0,277.8 389.3,293.9" fill="#4c1051" stroke="#4c1051" stroke-width=".3"/>
<polygon points="348.0,278.9 368.9,273.5 356.1,291.4" fill="#56125b" stroke="#56125b" stroke-width=".3"/>
<polygon points="348.0,278.9 348.2,274.4 368.9,273.5" fill="#521158" stroke="#521158" stroke-width=".3"/>
<polygon points="348.2,274.4 348.0,278.9 335.0,281.0" fill="#57125d" stroke="#57125d" stroke-width=".3"/>
<polygon points="331.1,291.5 348.0,278.9 356.1,291.4" fill="#4e1154" stroke="#4e1154" stroke-width=".3"/>
<polygon points="348.0,278.9 331.1,291.5 335.0,281.0" fill="#541259" stroke="#541259" stroke-width=".3"/>
<polygon points="408.9,335.0 423.8,350.0 408.0,356.4" fill="#400e45" stroke="#400e45" stroke-width=".3"/>
<polygon points="425.1,343.5 423.8,350.0 408.9,335.0" fill="#470f4c" stroke="#470f4c" stroke-width=".3"/>
<polygon points="423.8,350.0 431.7,348.0 408.0,356.4" fill="#400e45" stroke="#400e45" stroke-width=".3"/>
<polygon points="423.8,350.0 425.1,343.5 431.7,348.0" fill="#410e46" stroke="#410e46" stroke-width=".3"/>
<polygon points="431.1,285.0 443.4,298.3 427.1,286.7" fill="#460f4b" stroke="#460f4b" stroke-width=".3"/>
<polygon points="431.7,282.0 431.1,285.0 427.1,286.7" fill="#450f4a" stroke="#450f4a" stroke-width=".3"/>
<polygon points="443.4,298.3 431.1,285.0 448.6,290.5" fill="#440e49" stroke="#440e49" stroke-width=".3"/>
<polygon points="431.1,285.0 431.7,282.0 448.6,290.5" fill="#3f0d43" stroke="#3f0d43" stroke-width=".3"/>
<polygon points="369.7,313.4 367.9,323.5 357.6,323.3" fill="#4f1154" stroke="#4f1154" stroke-width=".3"/>
<polygon points="367.9,323.5 369.7,313.4 376.1,321.5" fill="#501156" stroke="#501156" stroke-width=".3"/>
<polygon points="367.9,323.5 376.4,330.8 357.6,323.3" fill="#4e1053" stroke="#4e1053" stroke-width=".3"/>
<polygon points="376.4,330.8 367.9,323.5 376.1,321.5" fill="#4b1050" stroke="#4b1050" stroke-width=".3"/>
<polygon points="369.7,313.4 373.3,302.9 376.1,321.5" fill="#4c1051" stroke="#4c1051" stroke-width=".3"/>
<polygon points="373.3,302.9 372.5,299.2 389.3,293.9" fill="#480f4d" stroke="#480f4d" stroke-width=".3"/>
<polygon points="372.5,299.2 373.3,302.9 356.1,291.4" fill="#4d1052" stroke="#4d1052" stroke-width=".3"/>
<polygon points="373.3,302.9 369.7,313.4 356.1,291.4" fill="#54125a" stroke="#54125a" stroke-width=".3"/>
<polygon points="398.8,321.1 373.3,302.9 389.3,293.9" fill="#501155" stroke="#501155" stroke-width=".3"/>
<polygon points="373.3,302.9 398.8,321.1 376.1,321.5" fill="#4d1052" stroke="#4d1052" stroke-width=".3"/>
</g>
<polyline points="449.0,280.7 455.3,289.0 461.3,302.2 461.3,322.9 451.9,341.2 433.6,352.0 407.9,360.5 391.7,354.6" fill="none" stroke="#9c9c9c" stroke-width="7.6" stroke-linejoin="miter" />
<polyline points="446.8,282.4 452.9,290.5 458.5,302.8 458.5,322.2 449.8,339.2 432.4,349.4 408.0,357.6 392.7,351.9" fill="none" stroke="#4e4e4e" stroke-width="1.0" stroke-linejoin="miter" />
<polyline points="448.3,281.3 454.5,289.5 460.4,302.4 460.4,322.7 451.2,340.6 433.2,351.2 408.0,359.6 392.8,355.2" fill="none" stroke="#4e4e4e" stroke-width="1.0" stroke-linejoin="miter" />
<polyline points="449.8,280.1 456.1,288.5 462.3,302.0 462.3,323.2 452.6,341.9 434.0,352.9 407.9,361.6 392.9,358.5" fill="none" stroke="#4e4e4e" stroke-width="1.0" stroke-linejoin="miter" />
<polyline points="451.4,279.0 457.8,287.6 464.2,301.5 464.2,323.6 454.1,343.3 434.8,354.6 407.9,363.6 393.1,361.8" fill="none" stroke="#4e4e4e" stroke-width="1.0" stroke-linejoin="miter" />
<polygon points="491.6,199.7 532.6,202.0 583.8,233.6 612.3,266.7 630.4,326.8 594.3,339.5 570.2,324.0 534.1,294.5 498.0,267.5 487.8,258.9" fill="#f083f0" />
<polygon points="505.0,213.0 532.0,215.0 578.0,244.0 605.0,273.0 629.0,326.0 594.3,338.5 570.2,323.2 534.1,293.7 498.5,266.8 500.0,255.0" fill="#b65cb9" />
<polygon points="508.3,216.3 532.4,217.5 576.0,245.9 603.4,275.1 624.5,323.5 594.2,334.1 570.2,318.1 534.1,288.8 502.3,264.1 503.5,253.6" fill="#f083f0" />
<polygon points="509.2,217.2 532.5,218.2 575.5,246.5 603.0,275.8 623.2,322.8 594.2,332.9 570.2,316.6 534.1,287.4 503.4,263.4 504.5,253.2" fill="#b65cb9" />
<polygon points="512.4,220.5 532.8,220.7 573.5,248.4 601.4,277.9 618.8,320.2 594.2,328.5 570.1,311.5 534.1,282.5 507.2,260.7 508.0,251.9" fill="#f083f0" />
<polygon points="513.4,221.4 533.0,221.4 573.0,249.0 601.0,278.5 617.5,319.5 594.1,327.2 570.1,310.1 534.0,281.1 508.2,259.9 509.0,251.5" fill="#b65cb9" />
<polygon points="516.6,224.7 533.3,224.0 571.0,250.9 599.4,280.6 613.0,317.0 594.1,322.9 570.1,305.0 534.0,276.2 512.1,257.2 512.5,250.1" fill="#f083f0" />
<polygon points="517.5,225.6 533.4,224.7 570.5,251.5 599.0,281.2 611.8,316.2 594.1,321.6 570.0,303.6 534.0,274.8 513.1,256.4 513.5,249.8" fill="#b65cb9" />
<polygon points="520.8,228.9 533.8,227.2 568.5,253.4 597.4,283.4 607.3,313.7 594.0,317.2 570.0,298.4 534.0,269.9 516.9,253.8 517.0,248.4" fill="#f083f0" />
<polyline points="494.5,204.0 532.0,205.0 582.0,236.5 610.0,268.5 628.0,326.0" fill="none" stroke="#b65cb9" stroke-width="2.6" stroke-linejoin="miter" />
<polyline points="494.5,203.0 491.5,258.0" fill="none" stroke="#b65cb9" stroke-width="2.6" stroke-linejoin="miter" />
<polygon points="506.0,212.0 528.0,213.0 586.0,262.0 580.0,268.0 530.0,226.0 508.0,222.0" fill="#f6a2f6" />
<polygon points="646.6,341.0 679.5,302.9 716.3,299.0 734.7,334.5 763.7,367.4 771.6,381.8 774.2,405.5 713.7,418.7 683.4,427.9" fill="#14f014" />
<polygon points="648.0,341.0 680.0,304.5 716.0,300.5 719.0,327.0 754.0,369.0 757.0,383.0 765.0,402.0 713.7,417.0 684.0,426.5" fill="#0c9e0c" />
<polygon points="652.7,341.0 681.9,306.8 715.1,302.6 718.0,326.6 753.1,369.0 755.8,382.8 759.0,399.6 711.9,413.4 685.9,421.5" fill="#14f014" />
<polygon points="654.3,341.0 682.5,307.6 714.7,303.3 717.7,326.4 752.8,368.9 755.4,382.8 756.8,398.8 711.3,412.1 686.5,419.7" fill="#0c9e0c" />
<polygon points="659.0,341.0 684.4,309.9 713.8,305.4 716.7,326.0 751.9,368.9 754.3,382.6 750.8,396.4 709.6,408.4 688.4,414.6" fill="#14f014" />
<polygon points="660.6,341.0 685.0,310.7 713.5,306.2 716.4,325.8 751.6,368.9 753.9,382.5 748.7,395.5 708.9,407.2 689.0,412.9" fill="#0c9e0c" />
<polygon points="665.3,341.0 686.9,313.0 712.5,308.3 715.4,325.4 750.7,368.8 752.7,382.3 742.6,393.1 707.2,403.5 690.9,407.8" fill="#14f014" />
<polygon points="666.9,341.0 687.6,313.8 712.2,309.0 715.0,325.2 750.3,368.8 752.3,382.3 740.5,392.3 706.6,402.2 691.6,406.0" fill="#0c9e0c" />
<polygon points="671.6,341.0 689.4,316.1 711.3,311.1 714.1,324.8 749.4,368.8 751.2,382.1 734.5,389.9 704.8,398.6 693.4,401.0" fill="#14f014" />
<polygon points="673.2,341.0 690.1,316.9 711.0,311.9 713.7,324.6 749.1,368.8 750.8,382.0 732.4,389.0 704.2,397.3 694.1,399.2" fill="#0c9e0c" />
<polygon points="677.9,341.0 691.9,319.2 710.0,314.0 712.7,324.2 748.2,368.7 749.6,381.9 726.3,386.6 702.4,393.7 695.9,394.2" fill="#14f014" />
<polygon points="719.0,327.0 734.7,334.5 763.7,367.4 771.6,381.8 757.0,383.0 754.0,369.0" fill="#2ae62a" />
<polygon points="692.5,451.0 713.2,448.2 741.4,436.9 805.3,426.6 825.0,505.5 824.0,516.0 701.0,516.0 699.0,508.0" fill="#f9ad5c" />
<polygon points="693.3,451.6 713.9,448.6 741.6,437.5 804.9,427.3 824.2,505.5 823.2,516.0 701.9,516.0 699.8,508.0" fill="#ab6c2a" />
<polygon points="696.8,453.9 716.7,450.2 742.2,439.8 803.2,430.1 820.9,505.5 820.0,516.0 705.5,516.0 703.0,508.0" fill="#f9ad5c" />
<polygon points="698.3,454.9 717.9,450.9 742.5,440.8 802.4,431.3 819.5,505.5 818.7,516.0 707.0,516.0 704.3,508.0" fill="#ab6c2a" />
<polygon points="701.8,457.3 720.7,452.6 743.1,443.2 800.7,434.2 816.2,505.5 815.5,516.0 710.7,516.0 707.5,508.0" fill="#f9ad5c" />
<polygon points="703.3,458.3 721.9,453.3 743.4,444.2 799.9,435.4 814.8,505.5 814.1,516.0 712.2,516.0 708.9,508.0" fill="#ab6c2a" />
<polygon points="706.7,460.7 724.8,454.9 744.0,446.6 798.2,438.2 811.4,505.5 810.9,516.0 715.9,516.0 712.1,508.0" fill="#f9ad5c" />
<polygon points="708.2,461.7 726.0,455.6 744.3,447.6 797.5,439.4 810.0,505.5 809.6,516.0 717.4,516.0 713.4,508.0" fill="#ab6c2a" />
<polygon points="711.7,464.1 728.8,457.3 744.9,450.0 795.7,442.3 806.7,505.5 806.4,516.0 721.0,516.0 716.6,508.0" fill="#f9ad5c" />
<polygon points="608.0,459.0 642.6,451.3 647.9,454.3 665.2,459.5 672.7,467.8 671.2,473.0 677.2,483.6 681.7,495.6 683.2,507.7 681.0,516.0 599.0,516.0 597.5,497.0 600.5,482.0 605.0,470.0" fill="#0b0b46" />
<polygon points="608.0,459.0 642.6,451.3 630.0,475.0 605.0,470.0" fill="#0e0e4c" />
<polygon points="647.9,454.3 665.2,459.5 672.7,467.8 655.0,470.0" fill="#09093e" />
<ellipse cx="203" cy="369.8" rx="32" ry="33" fill="#1a1af0" fill-opacity=".6"/>
<ellipse cx="203.4" cy="370.2" rx="23.4" ry="24.5" fill="#14ee14" fill-opacity=".92"/>
<ellipse cx="203" cy="370.2" rx="14" ry="15.4" fill="#ff1010"/>
<g fill="none" stroke="#111" stroke-width=".7"><circle cx="202.6" cy="369.8" r="2.8"/><circle cx="199.9" cy="376.9" r="1.4"/><circle cx="206.4" cy="376.6" r="1.8"/></g>
<ellipse cx="434.5" cy="447.9" rx="41.2" ry="40.2" fill="#1414f2"/>
<ellipse cx="434.5" cy="447.9" rx="32.2" ry="31.2" fill="#14f014"/>
<ellipse cx="434.5" cy="448" rx="22.8" ry="21.8" fill="#ff1010"/>
<circle cx="434.5" cy="451" r="4.5" fill="none" stroke="#111" stroke-width=".8"/>
<ellipse cx="574.3" cy="201" rx="18.6" ry="21.4" fill="#1414f2"/>
<ellipse cx="574.3" cy="201" rx="13.8" ry="16.4" fill="#14f014"/>
<ellipse cx="574.3" cy="201" rx="7.9" ry="10.7" fill="#ff1010"/>
<g fill="none" stroke="#111" stroke-width=".7"><ellipse cx="574" cy="197" rx="3.3" ry="3"/><ellipse cx="574.5" cy="205" rx="3.6" ry="3.8"/></g>
</g>
<g opacity=".78">
<rect x="510.5" y="491.5" width="217" height="8" rx="2.5" fill="#fff" stroke="#333" stroke-width=".8"/>
<rect x="511" y="492.3" width="36" height="3.3" fill="#fafafa"/>
<rect x="511" y="495.6" width="36" height="3.3" fill="#555"/>
<rect x="547" y="492.3" width="36" height="3.3" fill="#555"/>
<rect x="547" y="495.6" width="36" height="3.3" fill="#fafafa"/>
<rect x="583" y="492.3" width="36" height="3.3" fill="#fafafa"/>
<rect x="583" y="495.6" width="36" height="3.3" fill="#555"/>
<rect x="619" y="492.3" width="36" height="3.3" fill="#555"/>
<rect x="619" y="495.6" width="36" height="3.3" fill="#fafafa"/>
<rect x="655" y="492.3" width="36" height="3.3" fill="#fafafa"/>
<rect x="655" y="495.6" width="36" height="3.3" fill="#555"/>
<rect x="691" y="492.3" width="36" height="3.3" fill="#555"/>
<rect x="691" y="495.6" width="36" height="3.3" fill="#fafafa"/>
<path d="M511 492.4h216" stroke="#222" stroke-width=".7"/>
</g>
<text x="511" y="491.2" font-family="Liberation Sans" font-size="7.6" text-anchor="middle" fill="#111" transform="translate(511,0) scale(.9,1) translate(-511,0)">0</text>
<text x="547" y="491.2" font-family="Liberation Sans" font-size="7.6" text-anchor="middle" fill="#111" transform="translate(547,0) scale(.9,1) translate(-547,0)">200</text>
<text x="583" y="491.2" font-family="Liberation Sans" font-size="7.6" text-anchor="middle" fill="#111" transform="translate(583,0) scale(.9,1) translate(-583,0)">400</text>
<text x="619" y="491.2" font-family="Liberation Sans" font-size="7.6" text-anchor="middle" fill="#e8e0b0" transform="translate(619,0) scale(.9,1) translate(-619,0)">600</text>
<text x="655" y="491.2" font-family="Liberation Sans" font-size="7.6" text-anchor="middle" fill="#e8e0b0" transform="translate(655,0) scale(.9,1) translate(-655,0)">800</text>
<text x="691" y="491.2" font-family="Liberation Sans" font-size="7.6" text-anchor="middle" fill="#111" transform="translate(691,0) scale(.9,1) translate(-691,0)">1000</text>
<text x="727" y="491.2" font-family="Liberation Sans" font-size="7.6" text-anchor="middle" fill="#2a4a8a" transform="translate(727,0) scale(.9,1) translate(-727,0)">1200</text>
</svg><svg class="a" style="left:0;top:0" width="1200" height="532">
<path d="M162 170H1183" stroke="#7c7c7c" stroke-width="2" stroke-dasharray="3.2 1.8"/>
<path d="M1183 170V514" stroke="#7c7c7c" stroke-width="2" stroke-dasharray="3.2 1.8"/>
<path d="M161.5 170V513.5" stroke="#222" stroke-width="1" stroke-dasharray="3 2"/>
<path d="M161.5 513.5H1183" stroke="#222" stroke-width="1" stroke-dasharray="3 2.2"/>
</svg>
<!-- MAIN TOOLBAR -->
<div class="a" style="left:161.5px;top:148.5px;width:154px;height:18px;border:1px solid #d3d6db;border-radius:2px;background:linear-gradient(#fbfbfc,#eff1f4)"></div>
<div class="a" style="left:316.5px;top:148.5px;width:357px;height:18px;border:1px solid #d3d6db;border-radius:2px;background:linear-gradient(#fbfbfc,#eff1f4)"></div>
<div class="a" style="left:164px;top:151px;width:14px;height:13px;border-radius:2px;background:radial-gradient(#dfe3ea,#c9ced6)"></div>
<div class="a" style="left:237.5px;top:151.5px;width:13px;height:12px;background:#c9d7ee;border:1px solid #9eb3d8"></div>
<div class="a" style="left:458px;top:150.5px;width:15px;height:14px;background:linear-gradient(#eef2fa,#d3dcec)"></div>
<div class="a" style="left:474px;top:150.5px;width:15px;height:14px;background:linear-gradient(#eef2fa,#d3dcec)"></div>
<svg class="a" style="left:0;top:0" width="700" height="170" viewBox="0 0 700 170">
 <g stroke="#d0d3d8" stroke-width="1">
  <path d="M181.5 151v13M234.5 151v13M254.5 151v13M290.5 151v13M348.5 151v13M384.5 151v13M437.5 151v13M489.5 151v13M526.5 151v13"/>
 </g>
 <!-- select box -->
 <rect x="166.5" y="153.5" width="9.5" height="8" fill="#dfe4ea" stroke="#555" stroke-width=".7" stroke-dasharray="1.4 .8"/>
 <!-- move -->
 <path d="M191.5 152.5v9.5M186.8 157.2h9.5" stroke="#000" stroke-width="1.2"/>
 <path d="M191.5 152l-1.7 2h3.4zM191.5 162.5l-1.7-2h3.4zM186.3 157.2l2-1.7v3.4zM196.8 157.2l-2-1.7v3.4z" fill="#000"/>
 <!-- rotate -->
 <ellipse cx="207.5" cy="157.2" rx="2.2" ry="4.8" fill="none" stroke="#999" stroke-width=".8"/>
 <path d="M203 157.2 Q207.5 153 212.5 157.2 Q207.5 161 203 157.2" fill="none" stroke="#999" stroke-width=".8"/>
 <!-- zoom -->
 <circle cx="222" cy="155.5" r="3.2" fill="#e4f0fb" stroke="#7d8a99" stroke-width="1"/>
 <path d="M224.5 158l3.5 3.5" stroke="#e5a020" stroke-width="1.8"/>
 <!-- fit -->
 <path d="M240.5 153.5l3 3M248 153.5l-3 3M240.5 161l3-3M248 161l-3-3" stroke="#1f3d78" stroke-width="1.1"/>
 <!-- grid # -->
 <path d="M262.5 153v9M265.5 153v9M260 155.5h8M260 159.5h8" stroke="#222" stroke-width="1"/>
 <!-- ruler -->
 <rect x="275.5" y="154.2" width="10" height="5" rx="1" fill="#f0a040" stroke="#c07020" stroke-width=".5"/>
 <!-- image -->
 <rect x="295.5" y="153.5" width="9.5" height="8" fill="#8ec060" stroke="#6a86c6" stroke-width=".8"/>
 <circle cx="301.5" cy="156.5" r="1.6" fill="#e8a040"/>
 <path d="M307.5 156.5h3.5l-1.75 2z" fill="#222"/>
 <path d="M340 156.5h3.5l-1.75 2z" fill="#222"/>
 <!-- polygon -->
 <path d="M354.5 153.5v7.5h9v-4.5h-5.5v-3z" fill="none" stroke="#222" stroke-width=".9"/>
 <g fill="#3a7ae0"><circle cx="354.5" cy="153.5" r="1"/><circle cx="354.5" cy="161" r="1"/><circle cx="363.5" cy="161" r="1"/><circle cx="363.5" cy="156.5" r="1"/><circle cx="358" cy="153.5" r="1"/></g>
 <!-- pencil -->
 <path d="M371 161.5l1-3 6.5-6.5 2 2-6.5 6.5z" fill="#f3c448" stroke="#c88a20" stroke-width=".6"/>
 <!-- node tools -->
 <g>
  <circle cx="393" cy="154.5" r="1.3" fill="#111"/><path d="M394 161.5l2.5-2.5M393.6 159.2v2.6h2.6M397 158l2.5-2.5M399.8 155.2v2.6M397.2 155.2h2.6" stroke="#3fae3f" stroke-width="1.5" fill="none"/>
  <circle cx="409" cy="154.5" r="1.3" fill="#111"/><path d="M412.5 156.5v5.5M409.8 159.2h5.5" stroke="#6fb23f" stroke-width="2.1"/>
  <circle cx="425" cy="154.5" r="1.3" fill="#111"/><path d="M427 157.5l4 4M431 157.5l-4 4" stroke="#e03030" stroke-width="1.4"/>
 </g>
 <path d="M443 154.3h8" stroke="#111" stroke-width="1.5"/><circle cx="443" cy="154.3" r="1.4" fill="#111"/><circle cx="451" cy="154.3" r="1.4" fill="#111"/>
 <path d="M459 154.3h8" stroke="#111" stroke-width="1.5"/><circle cx="459" cy="154.3" r="1.4" fill="#111"/><circle cx="467" cy="154.3" r="1.4" fill="#111"/>
 <path d="M475 154.3h8" stroke="#111" stroke-width="1.5"/><circle cx="475" cy="154.3" r="1.4" fill="#111"/><circle cx="483" cy="154.3" r="1.4" fill="#111"/>
 <path d="M496 154.3h8" stroke="#111" stroke-width="1.5"/><circle cx="496" cy="154.3" r="1.4" fill="#111"/><circle cx="504" cy="154.3" r="1.4" fill="#111"/>
 <path d="M512 154.3h8" stroke="#111" stroke-width="1.5"/><circle cx="512" cy="154.3" r="1.4" fill="#111"/><circle cx="520" cy="154.3" r="1.4" fill="#111"/>
 <path d="M532 154.3h8" stroke="#111" stroke-width="1.5"/><circle cx="532" cy="154.3" r="1.4" fill="#111"/><circle cx="540" cy="154.3" r="1.4" fill="#111"/>
 <path d="M548 154.3h8" stroke="#111" stroke-width="1.5"/><circle cx="548" cy="154.3" r="1.4" fill="#111"/><circle cx="556" cy="154.3" r="1.4" fill="#111"/>
 <path d="M564 154.3h8" stroke="#111" stroke-width="1.5"/><circle cx="564" cy="154.3" r="1.4" fill="#111"/><circle cx="572" cy="154.3" r="1.4" fill="#111"/>
 <path d="M580 154.3h8" stroke="#111" stroke-width="1.5"/><circle cx="580" cy="154.3" r="1.4" fill="#111"/><circle cx="588" cy="154.3" r="1.4" fill="#111"/>
 <path d="M596 154.3h8" stroke="#111" stroke-width="1.5"/><circle cx="596" cy="154.3" r="1.4" fill="#111"/><circle cx="604" cy="154.3" r="1.4" fill="#111"/>
 <path d="M612 154.3h8" stroke="#111" stroke-width="1.5"/><circle cx="612" cy="154.3" r="1.4" fill="#111"/><circle cx="620" cy="154.3" r="1.4" fill="#111"/>
 <path d="M628 154.3h8" stroke="#111" stroke-width="1.5"/><circle cx="628" cy="154.3" r="1.4" fill="#111"/><circle cx="636" cy="154.3" r="1.4" fill="#111"/>
 <path d="M444 161.5l3.5-3.5M443.6 159.2v2.6h2.6M448.5 160l3.5-3.5M452 156.5v2.6" stroke="#3fae3f" stroke-width="1.5" fill="none"/>
 <path d="M463 157v5M460.5 159.5h5" stroke="#6fb23f" stroke-width="2"/>
 <path d="M477 157.5l4 4M481 157.5l-4 4" stroke="#e03030" stroke-width="1.4"/>
 <ellipse cx="498.5" cy="159.8" rx="2.6" ry="1.9" fill="none" stroke="#888" stroke-width="1.1"/><ellipse cx="501.5" cy="159.8" rx="2.6" ry="1.9" fill="none" stroke="#888" stroke-width="1.1"/>
 <ellipse cx="514.5" cy="159.8" rx="2.6" ry="1.9" fill="none" stroke="#888" stroke-width="1.1"/><ellipse cx="517.5" cy="159.8" rx="2.6" ry="1.9" fill="none" stroke="#888" stroke-width="1.1"/><path d="M513.5 162.5l5.5-5.5" stroke="#e03030" stroke-width=".9"/>
 <path d="M533 161.5q3-5 6 0" fill="none" stroke="#111" stroke-width="1.8"/>
 <path d="M552 156v3.5" stroke="#3a9a3a" stroke-width="2.4"/><path d="M550 158.5l2 2.5 2-2.5z" fill="#3a9a3a"/><path d="M548 161.8h8" stroke="#888" stroke-width=".9"/>
 <path d="M564.5 160.3h7" stroke="#222" stroke-width="1.2"/><circle cx="564.5" cy="160.3" r="1.1" fill="#222"/><circle cx="571.5" cy="160.3" r="1.1" fill="#222"/><path d="M565.5 162.8l5.5-5.5" stroke="#e03030" stroke-width=".8"/>
 <path d="M580.5 160.3h7" stroke="#222" stroke-width="1.2"/><circle cx="580.5" cy="160.3" r="1.1" fill="#222"/><circle cx="587.5" cy="160.3" r="1.1" fill="#222"/><path d="M583 158.6l3.2 1.7-3.2 1.7z" fill="#2a9a2a"/>
 <path d="M597 160.3h7" stroke="#2a8a2a" stroke-width="1.5"/><path d="M598.5 158.3l-2 2 2 2M602.5 158.3l2 2-2 2" stroke="#2a8a2a" stroke-width="1.2" fill="none"/>
 <path d="M612.5 161.3h8" stroke="#111" stroke-width="1.3"/><circle cx="612.5" cy="161.3" r="1.3" fill="#111"/><circle cx="620.5" cy="161.3" r="1.3" fill="#111"/><path d="M613.5 155.5l6 5M619.5 155.5l-6 5" stroke="#222" stroke-width="1"/><path d="M614 156.8l5 3.2" stroke="#e05050" stroke-width=".7"/>
 <path d="M628.5 160.5h8" stroke="#333" stroke-width="1.2"/><circle cx="628.5" cy="160.5" r="1.2" fill="#333"/><circle cx="636.5" cy="160.5" r="1.2" fill="#333"/><circle cx="632.5" cy="160.5" r="1.4" fill="#f07a10"/>
 <!-- open -->
 <path d="M644.5 153.5h3l1 1h4.5v6.5h-8.5z" fill="#e09a30"/>
 <path d="M645 156.5h9.5l-1.5 4.5h-8z" fill="#f6c060"/>
 <!-- save -->
 <rect x="660" y="152.5" width="9" height="9" rx=".8" fill="#1f3656"/>
 <rect x="661.8" y="153.2" width="5.5" height="3" fill="#e8eef6"/>
 <rect x="661.5" y="158" width="6" height="3" fill="#4aa0e8"/>
</svg>
<div class="t" style="left:321.5px;top:152px;font-size:9px">Snap</div>

<!-- gizmo -->
<svg class="a" style="left:1120px;top:170.5px" width="63" height="60" viewBox="1120 170.5 63 60">
 <defs><radialGradient id="sun" cx=".45" cy=".45" r=".6"><stop offset="0" stop-color="#fff6a0"/><stop offset=".5" stop-color="#ffd820"/><stop offset="1" stop-color="#f5b800"/></radialGradient></defs>
 <path d="M1176 166 L1179 172 L1186 169 L1183.5 175.5 L1189 179 L1182.5 181 L1184 188 L1178 184.5 L1174 190 L1172.5 183.5 L1166 184.5 L1169.5 179 L1164.5 174.5 L1171 173.5 L1170.5 167 L1175 171 Z" fill="url(#sun)"/>
 <path d="M1142.9 179.5 L1151.7 181.4 L1149.2 190.4 Z" fill="#86d030" stroke="#5aa020" stroke-width=".4"/>
 <path d="M1144 174.2l2.2 2.5 2.2-2.5M1146.2 176.7v2.8" stroke="#111" stroke-width="1.1" fill="none"/>
 <path d="M1162 197.3 L1172.4 190.8 L1173.7 199.2 Z" fill="#e8400e"/>
 <path d="M1174.6 192.6l3.4 4M1178 192.6l-3.4 4" stroke="#111" stroke-width="1.1"/>
 <path d="M1144.2 194.5 L1159.5 193 L1161 206 L1145.5 208 Z" fill="#cfcfcf" stroke="#a8a8a8" stroke-width=".5"/>
 <path d="M1145.5 208 L1161 206 L1161.2 208.3 L1145.8 210.3 Z" fill="#5a5a5a"/>
 <circle cx="1152.6" cy="198" r="3.4" fill="#1d3a6a"/>
 <path d="M1151.2 196.6h2.8l-2.8 2.8h2.8" stroke="#e8d8a0" stroke-width=".7" fill="none"/>
 <path d="M1131 202 L1142.9 203 L1134.8 210 Z" fill="#3e3e3e"/>
 <path d="M1153.2 220.8 L1156.4 209.5 L1162 219 Z" fill="#3e3e3e"/>
</svg>
<!-- right tabs -->
<div class="a" style="left:1186px;top:4px;width:10px;height:29px;border:1px solid #c5c9cf;border-right:none;background:linear-gradient(90deg,#f2f3f5,#e4e7eb)"></div>
<div class="a" style="left:1186px;top:35px;width:10px;height:30px;border:1px solid #c5c9cf;border-right:none;background:linear-gradient(90deg,#f2f3f5,#e4e7eb)"></div>
<div class="t" style="left:1196.5px;top:8px;transform:rotate(90deg) scaleX(.77);transform-origin:0 0">Layers</div>
<div class="t" style="left:1196.5px;top:39px;transform:rotate(90deg) scaleX(.77);transform-origin:0 0">History</div>
<div class="t" style="left:162px;top:516px;color:#3a5aa8;font-size:9px">(</div>
</body></html>
